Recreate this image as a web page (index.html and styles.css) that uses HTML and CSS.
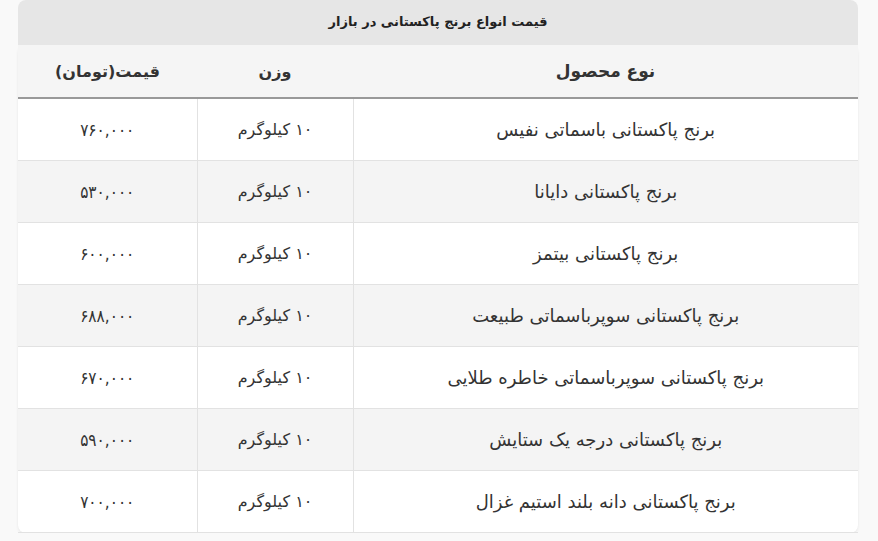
FILE: index.html
```html
<!DOCTYPE html>
<html lang="fa" dir="rtl">
<head>
<meta charset="utf-8">
<link rel="stylesheet" href="styles.css">
</head>
<body>
<div class="wrap">
<table class="price-table">
<caption>قیمت انواع برنج پاکستانی در بازار</caption>
<thead>
<tr><th class="c-name">نوع محصول</th><th class="c-weight">وزن</th><th class="c-price">قیمت(تومان)</th></tr>
</thead>
<tbody>
<tr><td class="name">برنج پاکستانی باسماتی نفیس</td><td>۱۰ کیلوگرم</td><td class="price">۷۶۰,۰۰۰</td></tr>
<tr><td class="name">برنج پاکستانی دایانا</td><td>۱۰ کیلوگرم</td><td class="price">۵۳۰,۰۰۰</td></tr>
<tr><td class="name">برنج پاکستانی بیتمز</td><td>۱۰ کیلوگرم</td><td class="price">۶۰۰,۰۰۰</td></tr>
<tr><td class="name">برنج پاکستانی سوپرباسماتی طبیعت</td><td>۱۰ کیلوگرم</td><td class="price">۶۸۸,۰۰۰</td></tr>
<tr><td class="name">برنج پاکستانی سوپرباسماتی خاطره طلایی</td><td>۱۰ کیلوگرم</td><td class="price">۶۷۰,۰۰۰</td></tr>
<tr><td class="name">برنج پاکستانی درجه یک ستایش</td><td>۱۰ کیلوگرم</td><td class="price">۵۹۰,۰۰۰</td></tr>
<tr><td class="name">برنج پاکستانی دانه بلند استیم غزال</td><td>۱۰ کیلوگرم</td><td class="price">۷۰۰,۰۰۰</td></tr>
</tbody>
</table>
</div>
</body>
</html>
```

FILE: styles.css
```css
html, body {
  margin: 0;
  padding: 0;
  background: #f9f9f9;
}
body {
  font-family: "DejaVu Sans", "Noto Sans", sans-serif;
  color: #333;
}
.wrap {
  padding: 0 20px 0 18px;
}
.price-table {
  width: 840px;
  border-collapse: collapse;
  background: #fff;
  box-shadow: 0 1px 3px rgba(0,0,0,0.08);
  border-radius: 8px;
}
.price-table caption {
  background: #e6e6e6;
  border-radius: 8px 8px 0 0;
  height: 45px;
  line-height: 44px;
  font-size: 13px;
  font-weight: bold;
  color: #222;
}
.price-table th {
  background: #f5f5f5;
  height: 52px;
  font-size: 16px;
  font-weight: bold;
  color: #333;
  border-bottom: 2px solid #999;
  padding: 0;
}
.price-table th.c-name {
  font-size: 17px;
}
.price-table td {
  height: 61px;
  font-size: 16px;
  text-align: center;
  padding: 0;
  border-left: 1px solid #e2e2e2;
  border-bottom: 1px solid #e2e2e2;
}
.price-table td.name {
  font-size: 18px;
}
.price-table td.price {
  font-family: "DejaVu Sans Condensed", "DejaVu Sans", sans-serif;
  font-size: 17px;
  border-left: none;
}
.price-table tbody tr:nth-child(even) td {
  background: #f4f4f4;
}
.c-name { width: 505px; }
.c-weight { width: 156px; }
.c-price { width: 179px; }
```
